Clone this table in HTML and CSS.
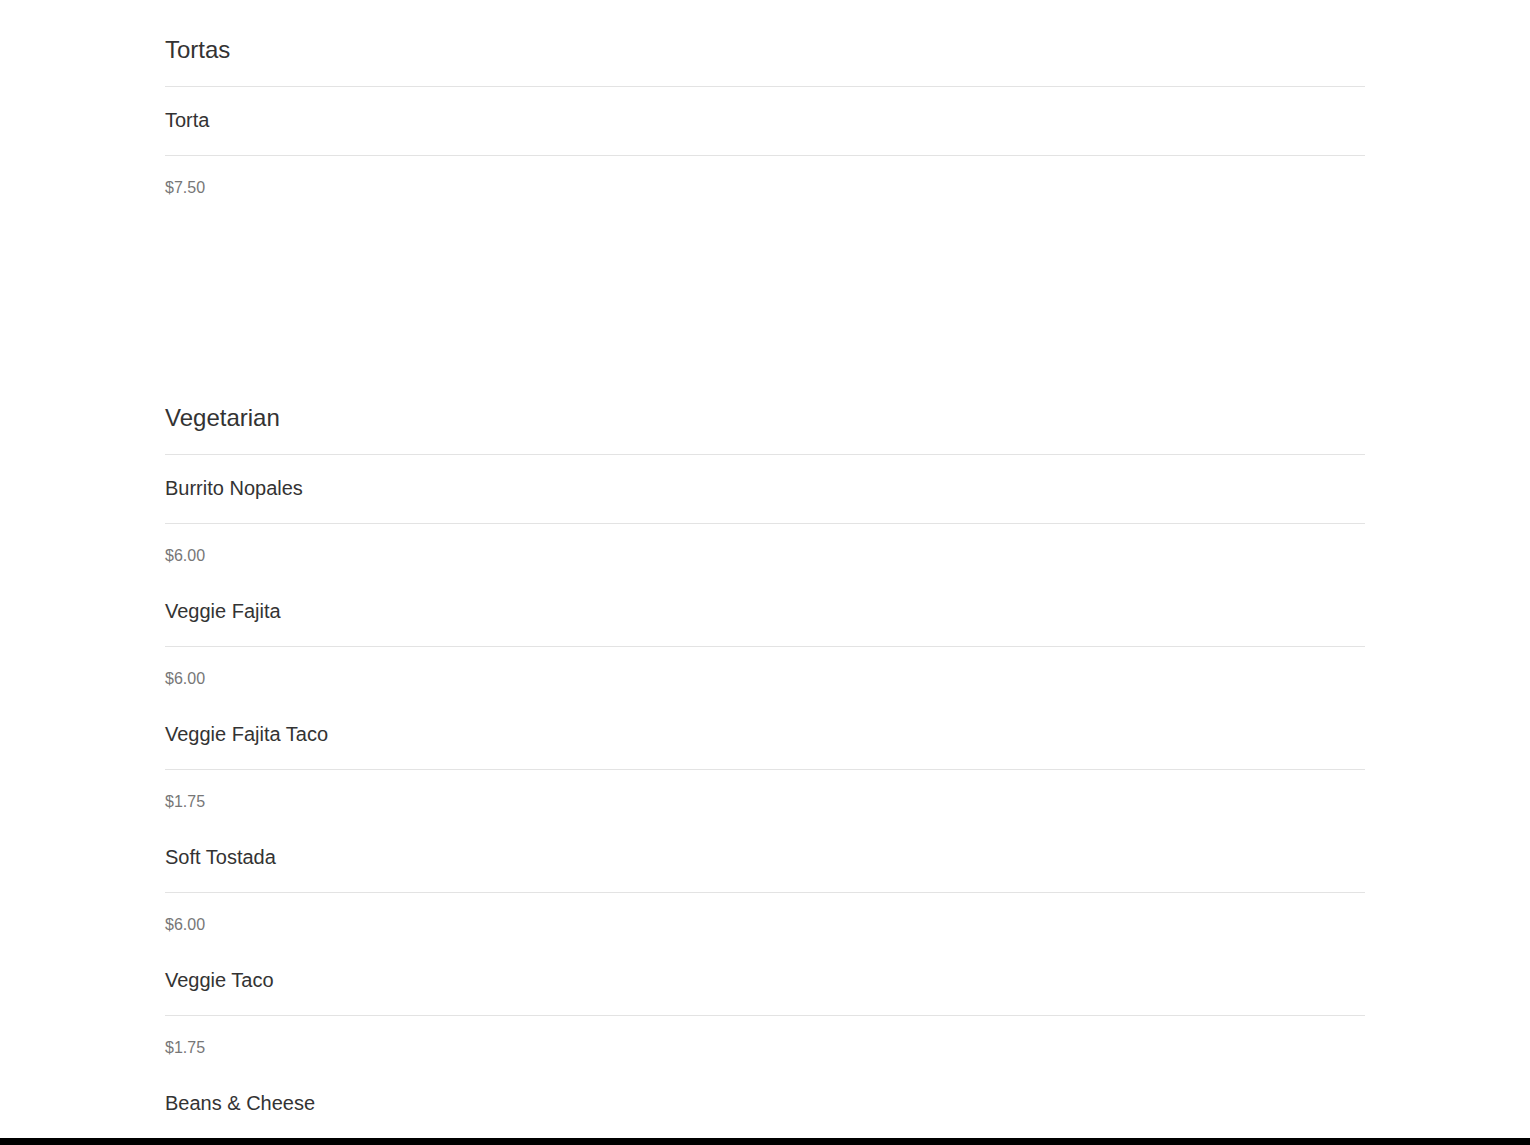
FILE: index.html
```html
<!DOCTYPE html>
<html lang="en">
<head>
  <meta charset="UTF-8" />
  <meta name="viewport" content="width=device-width, initial-scale=1.0" />
  <title>Menu</title>
  <link rel="stylesheet" href="styles.css">
</head>
<body>
  <div class="container">
    <section class="menu-section">
      <h2 class="section-title">Tortas</h2>
      <div class="item">
        <h3 class="item-name">Torta</h3>
        <p class="item-price">$7.50</p>
      </div>
    </section>

    <section class="menu-section">
      <h2 class="section-title">Vegetarian</h2>
      <div class="item">
        <h3 class="item-name">Burrito Nopales</h3>
        <p class="item-price">$6.00</p>
      </div>
      <div class="item">
        <h3 class="item-name">Veggie Fajita</h3>
        <p class="item-price">$6.00</p>
      </div>
      <div class="item">
        <h3 class="item-name">Veggie Fajita Taco</h3>
        <p class="item-price">$1.75</p>
      </div>
      <div class="item">
        <h3 class="item-name">Soft Tostada</h3>
        <p class="item-price">$6.00</p>
      </div>
      <div class="item">
        <h3 class="item-name">Veggie Taco</h3>
        <p class="item-price">$1.75</p>
      </div>
      <div class="item">
        <h3 class="item-name">Beans &amp; Cheese</h3>
        <p class="item-price">$6.00</p>
      </div>
    </section>
  </div>

  <div class="bottom-bar"></div>
</body>
</html>
```

FILE: styles.css
```css
body, html {
  margin: 0;
  font-family: "Liberation Sans", Arial, sans-serif;
  color: #333;
  background: #fff;
}
.container {
  width: 1200px;
  margin: 0 auto;
  padding: 0 15px;
}
.menu-section {
  margin-bottom: 170px;
}
.section-title {
  margin: 0;
  padding: 36px 0 23px;
  font-size: 24px;
  font-weight: normal;
  line-height: 27px;
  border-bottom: 1px solid #e3e3e3;
}
.item-name {
  margin: 0;
  padding: 22px 0 24px;
  font-size: 20px;
  font-weight: normal;
  line-height: 22px;
  border-bottom: 1px solid #e3e3e3;
}
.item-price {
  margin: 22px 0 12px;
  font-size: 16px;
  line-height: 20px;
  color: #777;
}
.bottom-bar {
  position: fixed;
  left: 0;
  right: 0;
  bottom: 0;
  height: 7px;
  background: #000;
}
```
